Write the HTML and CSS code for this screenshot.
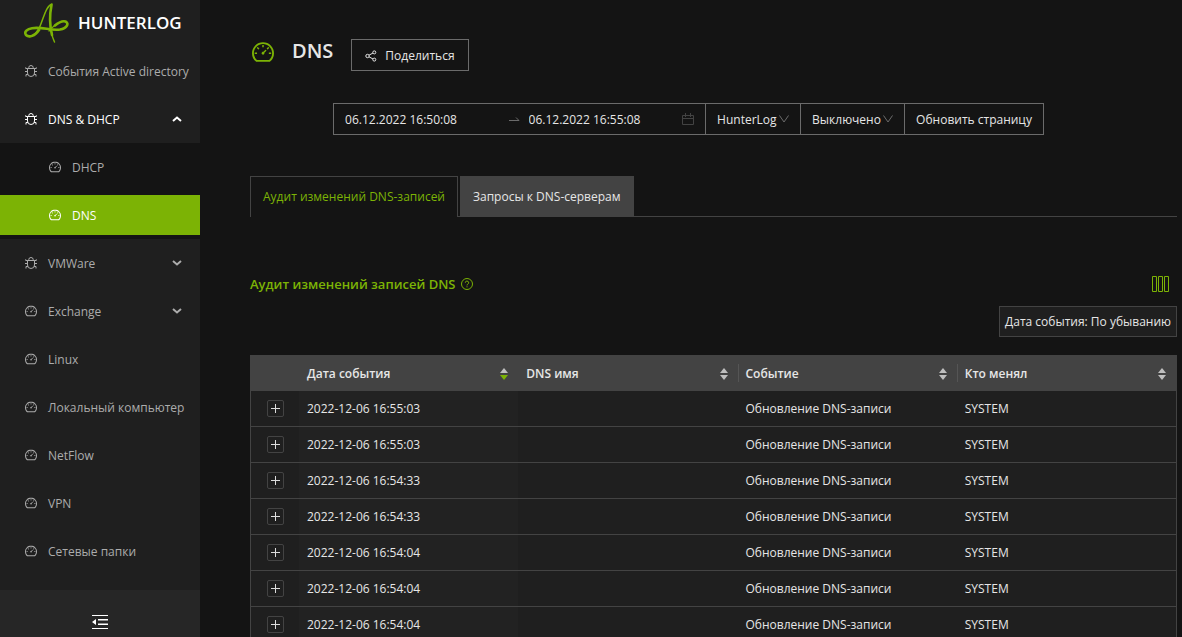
FILE: index.html
```html
<!DOCTYPE html>
<html lang="ru">
<head>
<meta charset="utf-8">
<meta name="viewport" content="width=device-width, initial-scale=1">
<title>HunterLog — DNS</title>
<link rel="stylesheet" href="styles.css">
</head>
<body>
<svg class="sprite" aria-hidden="true">
  <symbol id="dash" viewBox="64 64 896 896"><path d="M924.8 385.6a446.7 446.7 0 00-96-142.4 446.7 446.7 0 00-142.4-96C631.1 123.8 572.5 112 512 112s-119.1 11.8-174.4 35.2a446.7 446.7 0 00-142.4 96 446.7 446.7 0 00-96 142.4C75.8 440.9 64 499.5 64 560c0 132.7 58.3 257.7 159.9 343.1l1.7 1.4c5.8 4.8 13.1 7.5 20.6 7.5h531.7c7.5 0 14.8-2.7 20.6-7.5l1.7-1.4C901.7 817.7 960 692.7 960 560c0-60.5-11.9-119.1-35.2-174.4zM761.4 836H262.6A371.12 371.12 0 01140 560c0-99.4 38.7-192.8 109-263 70.3-70.3 163.7-109 263-109 99.4 0 192.8 38.7 263 109 70.3 70.3 109 163.7 109 263 0 105.6-44.5 205.5-122.6 276zM623.5 421.5a8.03 8.03 0 00-11.3 0L527.7 506c-18.7-5-39.4-.2-54.1 14.5a55.95 55.95 0 000 79.2 55.95 55.95 0 0079.2 0 55.87 55.87 0 0014.5-54.1l84.5-84.5c3.1-3.1 3.1-8.2 0-11.3l-28.3-28.3zM490 320h44c4.4 0 8-3.6 8-8v-80c0-4.4-3.6-8-8-8h-44c-4.4 0-8 3.6-8 8v80c0 4.4 3.6 8 8 8zm260 218v44c0 4.4 3.6 8 8 8h80c4.4 0 8-3.6 8-8v-44c0-4.4-3.6-8-8-8h-80c-4.4 0-8 3.6-8 8zm12.7-197.2l-31.1-31.1a8.03 8.03 0 00-11.3 0l-56.6 56.6a8.03 8.03 0 000 11.3l31.1 31.1c3.1 3.1 8.2 3.1 11.3 0l56.6-56.6c3.1-3.1 3.1-8.2 0-11.3zm-458.6-31.1a8.03 8.03 0 00-11.3 0l-31.1 31.1a8.03 8.03 0 000 11.3l56.6 56.6c3.1 3.1 8.2 3.1 11.3 0l31.1-31.1c3.1-3.1 3.1-8.2 0-11.3l-56.6-56.6zM262 530h-80c-4.4 0-8 3.6-8 8v44c0 4.4 3.6 8 8 8h80c4.4 0 8-3.6 8-8v-44c0-4.4-3.6-8-8-8z"/></symbol>
  <symbol id="bug" viewBox="0 0 12 12"><g fill="none" stroke="currentColor"><path d="M2.500 3.500h7v4.500a3.500 3.500 0 0 1-7 0zM3.800 3.500V2.600a2.200 2.100 0 0 1 4.400 0v.9M0 6.500h2.500M9.500 6.500H12M.7 2.300v1.200h2M11.300 2.300v1.200h-2M1 11.500V9.500h1.900M11 11.500V9.500H9.100"/></g></symbol>
  <symbol id="down" viewBox="0 0 10 10"><path d="M1 3l4 3.500L9 3" fill="none" stroke="currentColor" stroke-width="2"/></symbol>
  <symbol id="thin" viewBox="0 0 12 12"><path d="M1.500 2.500L6 9l4.500-6.500" fill="none" stroke="currentColor"/></symbol>
  <symbol id="sort" viewBox="0 0 8 12"><path class="asc" d="M4 0l4 5H0z"/><path class="desc" d="M0 7h8l-4 5z"/></symbol>
</svg>
<div class="app">
  <aside class="side">
    <a class="brand" href="#">
      <svg class="logo line" viewBox="0 0 46 42" stroke-linecap="round"><path stroke-width="1.500" d="M28 2C22 4 20 15 15.500 25.500C12 33 6 36 2.500 33.500"/><path stroke-width="2.600" d="M15 28C11 34 5 36 2 33C-.5 29 4 27 8 26.200C18 24.500 27 29 36 27.500C43 26 45.500 21.500 41.500 19.500C38 18.500 34 21 31 23.500"/><path stroke-width="1.300" d="M33 21.500C29 25 26.500 27 25 29"/><path stroke-width="2.600" d="M27.500 3C25.500 13 26 25 28 33"/><path stroke-width="1.500" d="M27.500 30C28 34 29 37 30.500 40"/></svg>
      <span>HUNTERLOG</span>
    </a>
    <nav class="menu">
      <a class="item" href="#"><svg class="ico"><use href="#bug"/></svg><span>События Active directory</span></a>
      <a class="item open" href="#"><svg class="ico"><use href="#bug"/></svg><span>DNS &amp; DHCP</span><svg class="arrow"><use href="#down"/></svg></a>
      <div class="submenu">
        <a class="item" href="#"><svg class="ico"><use href="#dash"/></svg><span>DHCP</span></a>
        <a class="item active" href="#"><svg class="ico"><use href="#dash"/></svg><span>DNS</span></a>
      </div>
      <a class="item" href="#"><svg class="ico"><use href="#bug"/></svg><span>VMWare</span><svg class="arrow"><use href="#down"/></svg></a>
      <a class="item" href="#"><svg class="ico"><use href="#dash"/></svg><span>Exchange</span><svg class="arrow"><use href="#down"/></svg></a>
      <a class="item" href="#"><svg class="ico"><use href="#dash"/></svg><span>Linux</span></a>
      <a class="item" href="#"><svg class="ico"><use href="#dash"/></svg><span>Локальный компьютер</span></a>
      <a class="item" href="#"><svg class="ico"><use href="#dash"/></svg><span>NetFlow</span></a>
      <a class="item" href="#"><svg class="ico"><use href="#dash"/></svg><span>VPN</span></a>
      <a class="item" href="#"><svg class="ico"><use href="#dash"/></svg><span>Сетевые папки</span></a>
    </nav>
    <button class="fold" type="button" aria-label="Свернуть меню"><svg viewBox="0 0 16 14"><path d="M0 0h16v1H0zM6 4h10v1.500H6zM6 8.500h10V10H6zM0 13h16v1H0zM4 4v6L0 7z"/></svg></button>
  </aside>
  <main class="main">
    <header class="head">
      <svg class="head-ico"><use href="#dash"/></svg>
      <h1>DNS</h1>
      <button class="btn share" type="button"><svg class="line" viewBox="0 0 12 12"><circle cx="2.500" cy="6" r="1.700"/><circle cx="9.300" cy="2.400" r="1.500"/><circle cx="9.300" cy="9.600" r="1.500"/><path d="M4 5.200l4-2.200M4 6.800L8 9"/></svg>Поделиться</button>
    </header>
    <form class="filters">
      <div class="range">
        <input type="text" value="06.12.2022 16:50:08" aria-label="Начало периода">
        <svg class="to line" viewBox="0 0 12 12"><path d="M1 7.500h10L8 4.500"/></svg>
        <input type="text" value="06.12.2022 16:55:08" aria-label="Конец периода">
        <svg class="cal line" viewBox="0 0 12 12"><path d="M.5 2.500h11v9H.5zM.5 5.500h11M3.500 0v4M8.500 0v4"/></svg>
      </div>
      <div class="pick source"><select aria-label="Источник"><option>HunterLog</option></select><svg><use href="#thin"/></svg></div>
      <div class="pick refresh"><select aria-label="Автообновление"><option>Выключено</option></select><svg><use href="#thin"/></svg></div>
      <button class="btn" type="button">Обновить страницу</button>
    </form>
    <section class="content">
      <div class="tabs" role="tablist">
        <button class="tab current" type="button" role="tab" aria-selected="true">Аудит изменений DNS-записей</button>
        <button class="tab" type="button" role="tab" aria-selected="false">Запросы к DNS-серверам</button>
      </div>
      <div class="caption">
        <h2>Аудит изменений записей DNS</h2>
        <svg class="help line" viewBox="0 0 12 12"><circle cx="6" cy="6" r="5.500"/><path d="M4.300 4.700a1.700 1.600 0 1 1 2.500 1.400Q6 6.500 6 7.400M6 8.300v1"/></svg>
        <button class="columns" type="button" aria-label="Столбцы"><svg class="line" viewBox="0 0 17 16"><path d="M.5.5h4v15h-4zM6.500.5h4v15h-4zM12.500.5h4v15h-4z"/></svg></button>
      </div>
      <div class="order"><button type="button">Дата события: По убыванию</button></div>
      <table class="grid">
        <colgroup><col class="c-exp"><col><col><col><col></colgroup>
        <thead><tr>
          <th></th>
          <th><div>Дата события<svg class="by-desc"><use href="#sort"/></svg></div></th>
          <th><div>DNS имя<svg><use href="#sort"/></svg></div></th>
          <th class="split"><div>Событие<svg><use href="#sort"/></svg></div></th>
          <th class="split"><div>Кто менял<svg><use href="#sort"/></svg></div></th>
        </tr></thead>
        <tbody>
          <tr><td><button class="plus" type="button" aria-label="Развернуть"></button></td><td>2022-12-06 16:55:03</td><td></td><td>Обновление DNS-записи</td><td>SYSTEM</td></tr>
          <tr><td><button class="plus" type="button" aria-label="Развернуть"></button></td><td>2022-12-06 16:55:03</td><td></td><td>Обновление DNS-записи</td><td>SYSTEM</td></tr>
          <tr><td><button class="plus" type="button" aria-label="Развернуть"></button></td><td>2022-12-06 16:54:33</td><td></td><td>Обновление DNS-записи</td><td>SYSTEM</td></tr>
          <tr><td><button class="plus" type="button" aria-label="Развернуть"></button></td><td>2022-12-06 16:54:33</td><td></td><td>Обновление DNS-записи</td><td>SYSTEM</td></tr>
          <tr><td><button class="plus" type="button" aria-label="Развернуть"></button></td><td>2022-12-06 16:54:04</td><td></td><td>Обновление DNS-записи</td><td>SYSTEM</td></tr>
          <tr><td><button class="plus" type="button" aria-label="Развернуть"></button></td><td>2022-12-06 16:54:04</td><td></td><td>Обновление DNS-записи</td><td>SYSTEM</td></tr>
          <tr><td><button class="plus" type="button" aria-label="Развернуть"></button></td><td>2022-12-06 16:54:04</td><td></td><td>Обновление DNS-записи</td><td>SYSTEM</td></tr>
        </tbody>
      </table>
    </section>
  </main>
</div>
</body>
</html>
```

FILE: styles.css
```css
* { box-sizing: border-box; }
body {
  margin: 0;
  background: #141414;
  color: #e6e6e6;
  font: 12px/20px "Segoe UI", "Open Sans", "Noto Sans", sans-serif;
}
button, input, select { font: inherit; color: inherit; margin: 0; }
button { cursor: pointer; }
a { color: inherit; text-decoration: none; }
svg { display: block; flex: none; fill: currentColor; }
.line { fill: none; stroke: currentColor; }
.sprite { position: absolute; width: 0; height: 0; }

.app { display: flex; height: 100vh; }

.side {
  flex: none;
  width: 200px;
  display: flex;
  flex-direction: column;
  background: #1f1f1f;
  color: #acacac;
}
.brand {
  display: flex;
  align-items: center;
  gap: 8px;
  height: 47px;
  padding: 0 0 2px 24px;
  color: #fff;
  font-size: 17px;
  font-weight: 600;
}
.logo { width: 46px; height: 42px; color: #7cb305; }
.menu { flex: 1; min-height: 0; overflow: hidden; }
.item {
  display: flex;
  align-items: center;
  gap: 11px;
  height: 40px;
  margin: 4px 0 8px;
  padding: 0 18px 0 25px;
  white-space: nowrap;
}
.item span { padding-top: 2px; }
.ico { width: 12px; height: 12px; }
.arrow { width: 10px; height: 10px; margin-left: auto; }
.open { color: #fff; }
.open .arrow { transform: rotate(180deg); }
.submenu {
  display: flow-root;
  margin: -4px 0 4px;
  background: #141414;
}
.submenu .item { margin: 4px 0 8px; padding-left: 49px; }
.submenu .item:last-child { margin-bottom: 4px; }
.submenu .active { background: #7cb305; color: #fff; }
.fold {
  display: flex;
  justify-content: center;
  align-items: center;
  height: 47px;
  padding: 16px 0 0;
  border: 0;
  background: #262626;
  color: #fff;
}
.fold svg { width: 16px; height: 14px; }

.main {
  flex: 1;
  min-width: 0;
  padding: 39px 5px 0 0;
  overflow-y: auto;
  scrollbar-width: none;
}
.head {
  display: flex;
  align-items: flex-start;
  padding-left: 52px;
}
.head-ico { width: 22px; height: 26px; color: #7cb305; }
h1 { margin: 0 18px; font-size: 20px; line-height: 24px; font-weight: 600; }
.btn {
  height: 32px;
  border: 1px solid #6b6b6b;
  background: transparent;
  padding: 1px 11px 0;
}
.share { display: flex; align-items: center; gap: 8px; padding: 1px 13px 0; }
.share svg { width: 12px; height: 12px; }

.filters { display: flex; justify-content: center; margin-top: 32px; }
.range, .pick { display: flex; align-items: center; height: 32px; border: 1px solid #6b6b6b; }
.range { width: 372px; padding: 0 11px; border-right: 0; }
.range input { flex: 1; min-width: 0; padding: 1px 0 0; border: 0; background: none; outline: 0; }
.to { width: 12px; height: 12px; margin: 0 9px; color: #6b6b6b; }
.cal { width: 12px; height: 12px; color: #434343; }
.pick { border-right: 0; padding: 0 10px 0 11px; }
.source { width: 95px; }
.refresh { width: 104px; }
.pick select { flex: 1; min-width: 0; appearance: none; border: 0; padding: 1px 0 0; background: none; outline: 0; }
.pick svg { width: 12px; height: 12px; color: #6b6b6b; }

.content { padding-left: 50px; }
.tabs { display: flex; gap: 2px; margin-top: 41px; border-bottom: 1px solid #434343; }
.tab {
  height: 40px;
  padding: 0 12px;
  border: 1px solid #434343;
  border-bottom: 0;
  background: #434343;
}
.current { height: 41px; margin-bottom: -1px; background: #141414; color: #7cb305; }

.caption { display: flex; align-items: center; gap: 5px; margin-top: 56px; color: #7cb305; }
h2 { margin: 0; font-size: 13px; line-height: 22px; font-weight: 600; }
.help { width: 12px; height: 12px; }
.columns { margin: 0 8px 0 auto; padding: 0; border: 0; background: none; }
.columns svg { width: 17px; height: 16px; }
.order { display: flex; justify-content: flex-end; margin: 11px 0 18px; }
.order button { height: 31px; padding: 0 5px; border: 1px solid #434343; background: #1f1f1f; }

.grid {
  width: 100%;
  table-layout: fixed;
  border-collapse: separate;
  border-spacing: 0;
  background: #1f1f1f;
  border: 1px solid #434343;
  border-top: 0;
}
.c-exp { width: 48px; }
.grid th { height: 36px; padding: 2px 10px 0 8px; background: #434343; text-align: left; font-weight: 600; }
.grid th div { display: flex; align-items: center; justify-content: space-between; }
.grid th svg { width: 8px; height: 12px; color: #bfbfbf; }
.grid th .by-desc { --desc: #7cb305; }
.desc { fill: var(--desc, currentColor); }
.grid .split {
  background-image: linear-gradient(#555, #555);
  background-size: 1px 18px;
  background-position: left center;
  background-repeat: no-repeat;
}
.grid td { height: 36px; padding: 0 8px; border-bottom: 1px solid #434343; }
.grid td:nth-child(2) { background: #222; }
.plus {
  display: block;
  width: 17px;
  height: 17px;
  margin: 0 auto;
  padding: 0;
  border: 1px solid #434343;
  border-radius: 2px;
  background:
    linear-gradient(#dcdcdc, #dcdcdc) center / 9px 1px no-repeat,
    linear-gradient(#dcdcdc, #dcdcdc) center / 1px 9px no-repeat;
}
```
